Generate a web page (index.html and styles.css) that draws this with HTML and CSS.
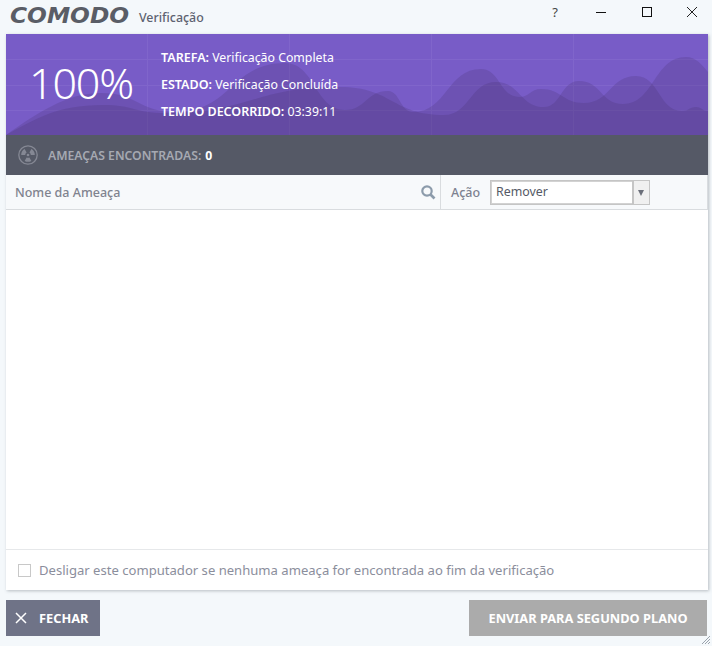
FILE: index.html
```html
<!DOCTYPE html>
<html lang="pt">
<head>
<meta charset="utf-8">
<title>Verificação</title>
<link rel="stylesheet" href="styles.css">
</head>
<body>
<div class="window">
  <header class="titlebar">
    <span class="logo"><span class="logo-text">COMODO</span></span>
    <span class="title">Verificação</span>
    <div class="controls">
      <span class="ctl ctl-help">?</span>
      <span class="ctl"><svg width="12" height="12" viewBox="0 0 12 12"><path d="M1 6.5h10" stroke="#111" fill="none"/></svg></span>
      <span class="ctl"><svg width="12" height="12" viewBox="0 0 12 12"><rect x="1.5" y="1.5" width="9" height="9" stroke="#111" fill="none"/></svg></span>
      <span class="ctl ctl-close"><svg width="12" height="12" viewBox="0 0 12 12"><path d="M1 1l10 10M11 1L1 11" stroke="#222" fill="none"/></svg></span>
    </div>
  </header>

  <main class="card">
    <section class="hero">
      <svg class="hero-art" viewBox="0 0 702 101" width="702" height="101" aria-hidden="true">
        <g class="grid">
          <path d="M0 25.5H702M0 51.5H702M0 76.5H702M141.500 0V101M283.500 0V101M425.500 0V101M567.500 0V101"/>
        </g>
        <path class="wave" d="M0 101C30 80 60 59 95 59C132 59 132 78 170 78C225 78 225 29 279 29C309 29 309 76 339 76C360 76 360 57 382 57C394 57 394 78 407 78C441 78 441 35 475 35C494 35 494 63 513 63C524 63 524 55 535 55C556 55 556 69 578 69C604 69 604 42 630 42C653 42 653 77 676 77C683 77 683 73 690 73C696 73 696 77 702 77L702 101Z"/>
        <path class="wave" d="M0 101C30 85 50 71 97 71C128 71 128 79 159 79C246 79 246 53 334 53C386 53 386 81 438 81C464 81 464 48 490 48C514 48 514 73 538 73C555 73 555 47 573 47C595 47 595 70 617 70C648 70 648 23 680 23C690 23 695 30 702 38L702 101Z"/>
      </svg>
      <div class="percent">100%</div>
      <div class="facts">
        <div class="fact"><b>TAREFA:</b> Verificação Completa</div>
        <div class="fact"><b>ESTADO:</b> Verificação Concluída</div>
        <div class="fact"><b>TEMPO DECORRIDO:</b> 03:39:11</div>
      </div>
    </section>

    <section class="threats">
      <svg class="rad" width="20" height="20" viewBox="0 0 20 20" aria-hidden="true">
        <circle cx="10" cy="10" r="9.200" fill="none" stroke="#858894" stroke-width="1.300"/>
        <circle cx="10" cy="10" r="1.300" fill="#858894"/>
        <path fill="#858894" d="M13.400 15.890A6.800 6.800 0 0 1 6.600 15.890L8.600 12.420A2.800 2.800 0 0 0 11.400 12.420ZM13.400 4.110A6.800 6.800 0 0 1 16.800 10H12.800A2.800 2.800 0 0 0 11.400 7.580ZM6.600 4.110A6.800 6.800 0 0 0 3.200 10H7.200A2.800 2.800 0 0 1 8.600 7.580Z"/>
      </svg>
      <span class="threats-label">AMEAÇAS ENCONTRADAS:</span>
      <span class="threats-count">0</span>
    </section>

    <section class="tablehead">
      <div class="col-name">
        <span>Nome da Ameaça</span>
        <svg width="16" height="16" viewBox="0 0 16 16" aria-hidden="true"><circle cx="7" cy="7" r="4.700" fill="none" stroke="#8c9bab" stroke-width="2.200"/><path d="M10.500 10.500L14.500 14.500" stroke="#8c9bab" stroke-width="2.600"/></svg>
      </div>
      <div class="col-action">
        <span class="action-label">Ação</span>
        <div class="select">
          <span class="select-value">Remover</span>
          <span class="select-arrow"></span>
        </div>
      </div>
    </section>

    <section class="list"></section>

    <section class="option">
      <span class="checkbox"></span>
      <span>Desligar este computador se nenhuma ameaça for encontrada ao fim da verificação</span>
    </section>
  </main>

  <footer class="footer">
    <button class="btn btn-close">
      <svg width="12" height="12" viewBox="0 0 12 12" aria-hidden="true"><path d="M1 1l10 10M11 1L1 11" stroke="#fff" stroke-width="1.500" fill="none"/></svg>
      FECHAR
    </button>
    <button class="btn btn-send">ENVIAR PARA SEGUNDO PLANO</button>
  </footer>
  <svg class="grip" width="10" height="10" viewBox="0 0 10 10" aria-hidden="true"><path d="M9 1L1 9M9 4L4 9M9 7L7 9" stroke="#9aa3ad" fill="none"/></svg>
</div>
</body>
</html>
```
FILE: styles.css
```css
* { box-sizing: border-box; }
html, body { margin: 0; padding: 0; }
body {
  background: #f4f8fb;
  font-family: "Noto Sans", "Open Sans", sans-serif;
  overflow: hidden;
}
.window {
  position: relative;
  width: 712px;
  height: 646px;
  display: flex;
  flex-direction: column;
}
.titlebar {
  height: 34px;
  flex: none;
  display: flex;
  align-items: center;
  padding-left: 10px;
}
.logo {
  width: 119px;
  height: 24px;
  display: block;
  overflow: visible;
  margin-top: -3px;
}
.logo-text {
  display: inline-block;
  font-family: "DejaVu Sans", sans-serif;
  font-weight: 700;
  font-style: italic;
  font-size: 21px;
  line-height: 24px;
  color: #5a5d66;
  transform-origin: 0 50%;
  transform: scaleX(1.11);
}
.title {
  margin-left: 10px;
  font-size: 12.4px;
  font-weight: 500;
  color: #5d6270;
  margin-top: 1px;
}
.controls {
  margin-left: auto;
  display: flex;
  align-items: center;
  margin-right: 14px;
  margin-top: -10px;
  gap: 34px;
}
.ctl { width: 12px; height: 12px; display: flex; align-items: center; justify-content: center; }
.ctl-help { font-size: 13px; color: #444; }
.ctl-close { margin-left: -1px; }
.card {
  flex: none;
  height: 556px;
  margin: 0 4px 0 6px;
  background: #fff;
  display: flex;
  flex-direction: column;
  box-shadow: 1px 1px 3px rgba(70, 80, 90, .35);
}
.hero {
  position: relative;
  height: 101px;
  flex: none;
  background: #785cc7;
  display: flex;
  align-items: center;
  color: #fff;
  overflow: hidden;
}
.hero-art { position: absolute; left: 0; top: 0; }
.grid path { stroke: #8065cb; fill: none; stroke-width: 1; }
.wave { fill: rgba(64, 45, 99, .2); }
.percent {
  position: relative;
  width: 150px;
  margin-right: 5px;
  text-align: center;
  font-size: 43px;
  font-weight: 300;
  line-height: 50px;
  letter-spacing: -1.2px;
  flex: none;
  margin-top: -3px;
}
.facts {
  position: relative;
  display: flex;
  flex-direction: column;
  gap: 9px;
  font-size: 12.3px;
  line-height: 18px;
  margin-top: 1px;
}
.fact b { font-weight: 600; font-size: 12.5px; }
.threats {
  height: 40px;
  flex: none;
  background: #555966;
  display: flex;
  align-items: center;
  padding-left: 12px;
  font-size: 12.2px;
  font-weight: 600;
  color: #a6a9b2;
}
.threats-label { margin-left: 10px; }
.threats-count { margin-left: 4px; color: #fff; font-weight: 700; }
.tablehead {
  height: 35px;
  flex: none;
  display: flex;
  background: #f7f9fb;
  border-bottom: 1px solid #d9dcdf;
  border-right: 1px solid #d9dcdf;
  font-size: 12.5px;
  color: #7d8190;
}
.col-name {
  width: 435px;
  flex: none;
  display: flex;
  align-items: center;
  justify-content: space-between;
  padding: 0 4px 0 9px;
  border-right: 1px solid #d9dcdf;
  font-weight: 500;
  color: #80838f;
}
.col-action {
  flex: 1;
  display: flex;
  align-items: center;
  padding-left: 10px;
}
.action-label { font-weight: 500; width: 39px; }
.select {
  width: 160px;
  height: 25px;
  display: flex;
  border: 1px solid #c5c5c5;
  background: #fff;
  box-shadow: inset 0 0 0 1px #d2d2d2;
}
.select-value {
  flex: 1;
  padding-left: 5px;
  font-size: 12.4px;
  line-height: 22px;
  color: #555a66;
}
.select-arrow {
  width: 17px;
  flex: none;
  background: #f0f0f0;
  border-left: 2px solid #c5c5c5;
  position: relative;
}
.select-arrow::after {
  content: "";
  position: absolute;
  left: 4px;
  top: 9px;
  border-left: 3px solid transparent;
  border-right: 3px solid transparent;
  border-top: 6px solid #6b6f7a;
}
.list { flex: 1; }
.option {
  height: 41px;
  flex: none;
  display: flex;
  align-items: center;
  border-top: 1px solid #e6e8ea;
  padding-left: 12px;
  font-size: 13.08px;
  color: #8b8e9c;
  gap: 8px;
}
.checkbox {
  width: 13px;
  height: 13px;
  border: 1px solid #c8c8c8;
  background: #fff;
  flex: none;
}
.footer {
  flex: none;
  display: flex;
  justify-content: space-between;
  margin-top: 10px;
  padding: 0 5px 0 6px;
}
.btn {
  height: 36px;
  border: 0;
  color: #fff;
  font-family: inherit;
  font-size: 12.8px;
  font-weight: 700;
  display: flex;
  align-items: center;
  justify-content: center;
}
.btn-close { width: 94px; background: #6f7387; gap: 12px; justify-content: flex-start; padding: 0 0 0 9px; }
.btn-send { width: 238px; background: #ababab; }
.grip { position: absolute; right: 1px; bottom: 1px; }
```
